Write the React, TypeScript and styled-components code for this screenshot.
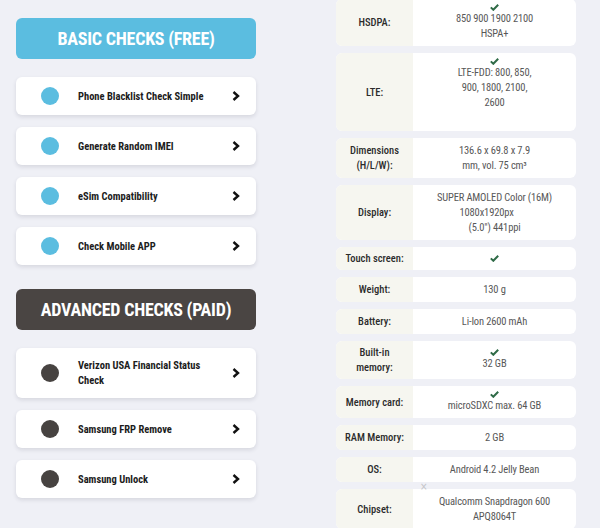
import React from "react"
import styled, { createGlobalStyle } from "styled-components"

const FONT = `Roboto, "DejaVu Sans Condensed", sans-serif`

const GlobalStyle = createGlobalStyle`
  html, body {
    margin: 0;
    padding: 0;
    background: #eff0f6;
    font-family: ${FONT};
    font-stretch: 75%;
  }
`

type Check = { title: string }

const FREE_CHECKS: Check[] = [
  { title: "Phone Blacklist Check Simple" },
  { title: "Generate Random IMEI" },
  { title: "eSim Compatibility" },
  { title: "Check Mobile APP" },
]

const PAID_CHECKS: Check[] = [
  { title: "Verizon USA Financial Status Check" },
  { title: "Samsung FRP Remove" },
  { title: "Samsung Unlock" },
]

type Spec = {
  label: string[]
  value: string[]
  check?: boolean
  spacer?: boolean
  closeMark?: boolean
}

const SPECS: Spec[] = [
  { label: ["HSDPA:"], value: ["850 900 1900 2100", "HSPA+"], check: true },
  {
    label: ["LTE:"],
    value: ["LTE-FDD: 800, 850,", "900, 1800, 2100,", "2600"],
    check: true,
    spacer: true,
  },
  { label: ["Dimensions", "(H/L/W):"], value: ["136.6 x 69.8 x 7.9", "mm, vol. 75 cm³"] },
  {
    label: ["Display:"],
    value: [
      "SUPER AMOLED Color (16M)",
      "1080x1920px\u00a0\u00a0\u00a0\u00a0\u00a0\u00a0\u00a0",
      "(5.0\") 441ppi",
    ],
  },
  { label: ["Touch screen:"], value: [], check: true },
  { label: ["Weight:"], value: ["130 g"] },
  { label: ["Battery:"], value: ["Li-Ion 2600 mAh"] },
  { label: ["Built-in", "memory:"], value: ["32 GB"], check: true },
  { label: ["Memory card:"], value: ["microSDXC max. 64 GB"], check: true },
  { label: ["RAM Memory:"], value: ["2 GB"] },
  { label: ["OS:"], value: ["Android 4.2 Jelly Bean"] },
  {
    label: ["Chipset:"],
    value: ["Qualcomm Snapdragon 600", "APQ8064T"],
    closeMark: true,
  },
]

const ChevronIcon = () => (
  <svg width="8" height="10" viewBox="0 0 8 10" aria-hidden="true">
    <path d="M1.5 1 L6 5 L1.5 9" fill="none" stroke="#111" strokeWidth="2.4" strokeLinejoin="miter" />
  </svg>
)

const CheckIcon = () => (
  <svg width="9" height="7" viewBox="0 0 9 7" aria-hidden="true">
    <path d="M0.8 3.4 L3.3 5.8 L8.2 0.8" fill="none" stroke="#2f6b47" strokeWidth="2" />
  </svg>
)

const App = () => {
  return (
    <>
      <GlobalStyle />
      <Page>
        <LeftColumn>
          <SectionHeading $tone="free">Basic checks (free)</SectionHeading>
          <CardList>
            {FREE_CHECKS.map(item => (
              <CheckCard key={item.title}>
                <Dot $tone="free" />
                <CardTitle>{item.title}</CardTitle>
                <ChevronIcon />
              </CheckCard>
            ))}
          </CardList>
          <SectionHeading $tone="paid" $spaced>
            Advanced checks (paid)
          </SectionHeading>
          <CardList>
            {PAID_CHECKS.map(item => (
              <CheckCard key={item.title}>
                <Dot $tone="paid" />
                <CardTitle>{item.title}</CardTitle>
                <ChevronIcon />
              </CheckCard>
            ))}
          </CardList>
        </LeftColumn>

        <SpecTable>
          {SPECS.map(spec => (
            <SpecRow key={spec.label.join(" ")}>
              <SpecLabel>
                {spec.label.map(line => (
                  <span key={line}>{line}</span>
                ))}
              </SpecLabel>
              <SpecValue>
                {spec.check && (
                  <CheckLine>
                    <CheckIcon />
                  </CheckLine>
                )}
                {spec.value.map(line => (
                  <span key={line}>{line}</span>
                ))}
                {spec.spacer && <Spacer />}
              </SpecValue>
              {spec.closeMark && <CloseMark>×</CloseMark>}
            </SpecRow>
          ))}
        </SpecTable>
      </Page>
    </>
  )
}

export default App

const Page = styled.div`
  display: grid;
  grid-template-columns: 240px 240px;
  column-gap: 80px;
  padding: 0 24px 0 16px;
  height: 528px;
  overflow: hidden;
  box-sizing: border-box;
`

const LeftColumn = styled.div`
  display: flex;
  flex-direction: column;
  padding-top: 18px;
`

const SectionHeading = styled.div<{ $tone: "free" | "paid"; $spaced?: boolean }>`
  height: 41px;
  margin-top: ${props => (props.$spaced ? "24px" : "0")};
  border-radius: 6px;
  background: ${props => (props.$tone === "free" ? "#5bbde0" : "#4a4543")};
  color: #fff;
  display: flex;
  align-items: center;
  justify-content: center;
  font-size: 18px;
  letter-spacing: -0.25px;
  font-weight: 700;
  text-transform: uppercase;
  white-space: nowrap;
`

const CardList = styled.div`
  display: flex;
  flex-direction: column;
  gap: 12px;
  margin-top: 18px;
`

const CheckCard = styled.div`
  min-height: 38px;
  display: flex;
  align-items: center;
  box-sizing: border-box;
  padding: 10px 16px 10px 25px;
  background: #fff;
  border-radius: 6px;
  box-shadow: 0 2px 4px rgba(30, 30, 60, 0.12);
`

const Dot = styled.span<{ $tone: "free" | "paid" }>`
  flex: none;
  width: 18px;
  height: 18px;
  border-radius: 50%;
  background: ${props => (props.$tone === "free" ? "#5bbde0" : "#474341")};
`

const CardTitle = styled.span`
  flex: 1;
  margin: 0 20px 0 19px;
  font-size: 10.5px;
  line-height: 15px;
  font-weight: 700;
  color: #1c1c1c;
`

const SpecTable = styled.div`
  display: flex;
  flex-direction: column;
  gap: 7px;
  margin-top: -1px;
`

const SpecRow = styled.div`
  position: relative;
  display: grid;
  grid-template-columns: 77px 1fr;
  border-radius: 6px;
  background: #fff;
`

const SpecLabel = styled.div`
  display: flex;
  flex-direction: column;
  align-items: center;
  justify-content: center;
  padding: 4px 2px;
  background: #f6f6f0;
  border-radius: 6px 0 0 6px;
  font-size: 10.5px;
  line-height: 15px;
  font-weight: 500;
  color: #2b2b2b;
  text-align: center;
  white-space: nowrap;
`

const SpecValue = styled.div`
  display: flex;
  flex-direction: column;
  align-items: center;
  justify-content: center;
  padding: 5px 8px;
  font-size: 10.5px;
  letter-spacing: -0.15px;
  line-height: 15px;
  color: #585858;
  text-align: center;
  white-space: nowrap;
`

const CheckLine = styled.span`
  display: flex;
  height: 7px;
  align-items: center;
  justify-content: center;
`

const Spacer = styled.span`
  height: 16px;
`

const CloseMark = styled.span`
  position: absolute;
  left: 84px;
  top: -7px;
  font-size: 10px;
  line-height: 10px;
  color: #c4c4c8;
  font-family: "DejaVu Sans", sans-serif;
`
